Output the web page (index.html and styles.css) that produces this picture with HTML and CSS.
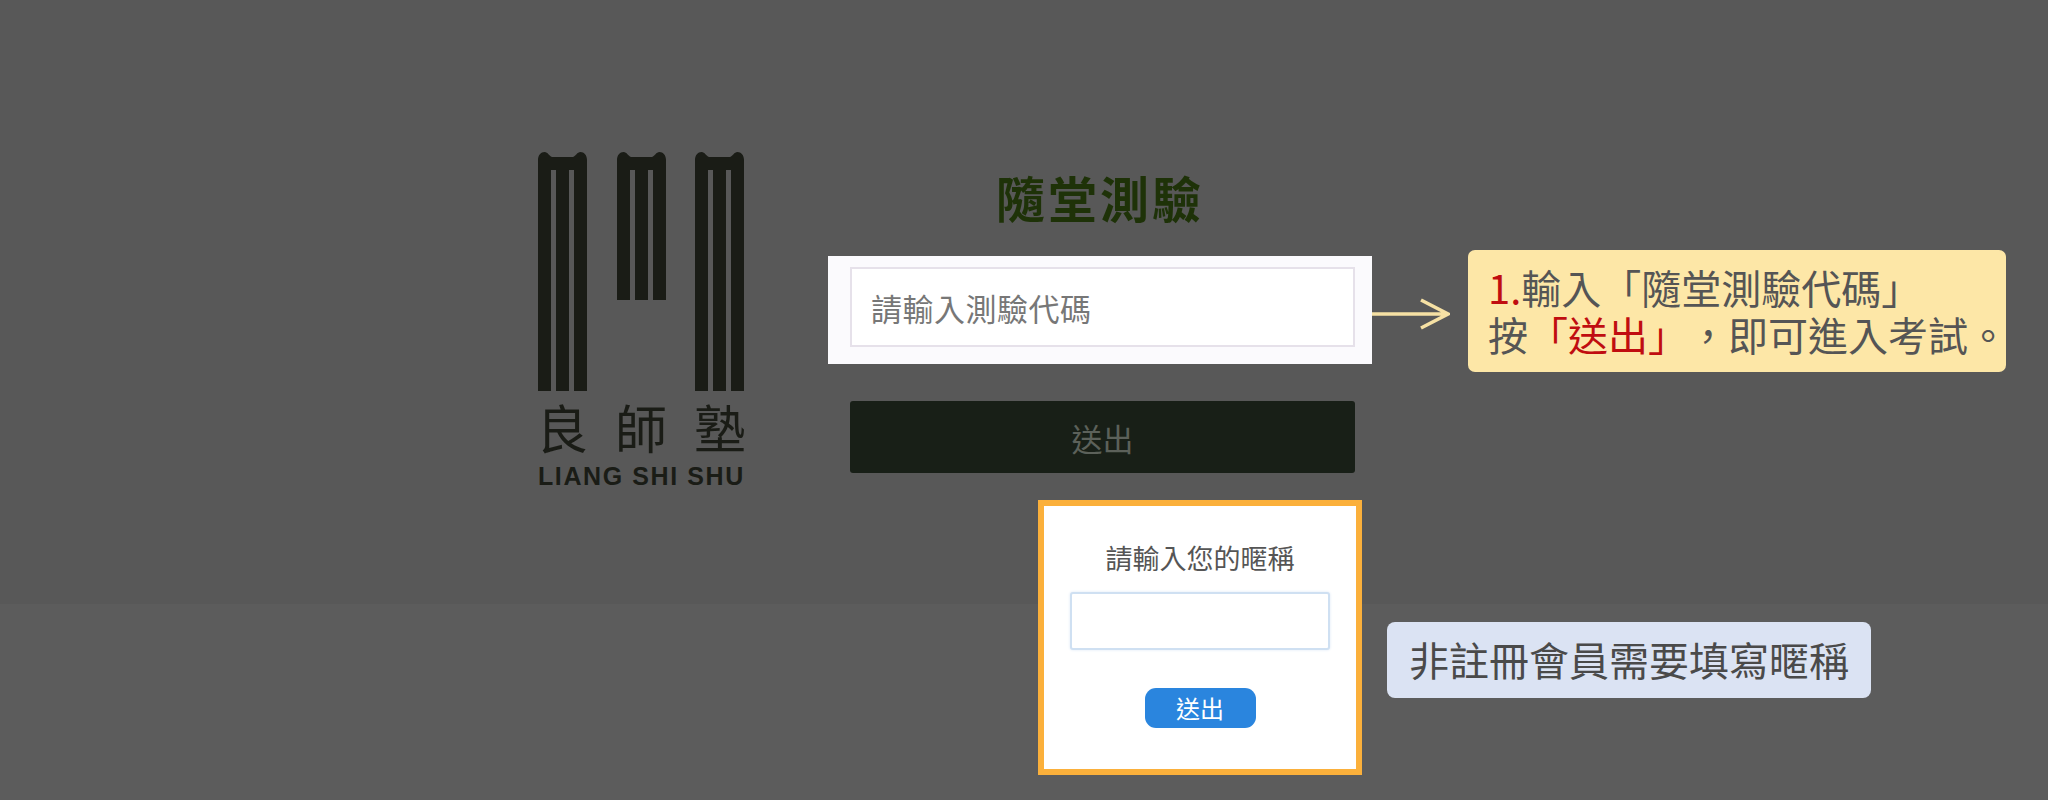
FILE: index.html
```html
<!DOCTYPE html>
<html lang="zh-Hant">
<head>
    <meta charset="UTF-8">
    <title>隨堂測驗</title>
    <link rel="stylesheet" href="styles.css">
</head>
<body>
    <div class="page">
        <div class="main">
            <div class="logo">
                <svg class="logo-mark" width="206" height="240" viewBox="0 0 206 240">
                    <path d="M0 239V8C0 3 3 0 6.500 0C10 0 11 4 14 5H35C38 4 39 0 42.500 0C46 0 49 3 49 8V239H36V18H31V239H18V18H13V239H0Z"/>
                    <path transform="translate(79 0)" d="M0 148V8C0 3 3 0 6.500 0C10 0 11 4 14 5H35C38 4 39 0 42.500 0C46 0 49 3 49 8V148H36V18H31V148H18V18H13V148H0Z"/>
                    <path transform="translate(157 0)" d="M0 239V8C0 3 3 0 6.500 0C10 0 11 4 14 5H35C38 4 39 0 42.500 0C46 0 49 3 49 8V239H36V18H31V239H18V18H13V239H0Z"/>
                </svg>
                <div class="logo-name"><span>良</span><span>師</span><span>塾</span></div>
                <div class="logo-en">LIANG SHI SHU</div>
            </div>
            <div class="form">
                <h1 class="title">隨堂測驗</h1>
                <div class="code-box">
                    <input class="code-input" type="text" placeholder="請輸入測驗代碼">
                </div>
                <button class="submit">送出</button>
            </div>
        </div>

        <div class="hint">
            <svg class="arrow" width="78" height="32" viewBox="0 0 78 32">
                <path d="M0 16H76M49 2L76 16L49 30"/>
            </svg>
            <div class="hint-text">
                <span class="red">1.</span>輸入「隨堂測驗代碼」<br>
                按<span class="red">「送出」</span>，即可進入考試。
            </div>
        </div>

        <div class="nick">
            <div class="dialog">
                <p class="dialog-label">請輸入您的暱稱</p>
                <input class="dialog-input" type="text">
                <button class="dialog-btn">送出</button>
            </div>
            <div class="note">非註冊會員需要填寫暱稱</div>
        </div>
    </div>
</body>
</html>
```

FILE: styles.css
```css
* {
    box-sizing: border-box;
}
body {
    margin: 0;
    font-family: "Noto Sans CJK TC", "Noto Sans", sans-serif;
    background: #5c5c5c;
}
.page {
    position: relative;
    height: 800px;
    overflow: hidden;
}
.main {
    height: 604px;
    background: #585858;
    display: flex;
    align-items: flex-start;
    padding-left: 538px;
}
.logo {
    width: 206px;
    margin-top: 152px;
}
.logo-mark {
    display: block;
    fill: #1a1c16;
}
.logo-name {
    display: flex;
    justify-content: space-between;
    margin: 2px -2px 0;
    font-size: 52px;
    line-height: 66px;
    font-weight: 400;
    color: #1a1c16;
}
.logo-en {
    margin-top: 2px;
    font-family: "Liberation Sans", Arial, sans-serif;
    font-size: 25px;
    line-height: 28px;
    font-weight: bold;
    letter-spacing: 1.6px;
    white-space: nowrap;
    color: #1a1c16;
}
.form {
    width: 544px;
    margin-left: 84px;
    padding-top: 164px;
}
.title {
    margin: 0;
    height: 92px;
    text-align: center;
    font-size: 49px;
    line-height: 66px;
    letter-spacing: 3px;
    font-weight: bold;
    color: #1e3208;
}
.code-box {
    height: 108px;
    padding: 11px 17px 17px 22px;
    background: #fbfafd;
}
.code-input {
    display: block;
    width: 100%;
    height: 80px;
    padding: 0 19px;
    border: 2px solid #e6e1ea;
    background: #fff;
    font-family: inherit;
    font-size: 31px;
    letter-spacing: 0.5px;
    color: #777;
}
.code-input::placeholder {
    color: #777;
    opacity: 1;
}
.submit {
    display: block;
    width: 505px;
    height: 72px;
    margin: 37px 0 0 22px;
    border: none;
    border-radius: 3px;
    background: #181f17;
    font-family: inherit;
    font-size: 31px;
    color: #5c615a;
}

/* annotations on top of the page */
.hint {
    position: absolute;
    left: 1372px;
    top: 250px;
    display: flex;
    align-items: flex-start;
    gap: 18px;
}
.arrow {
    margin-top: 48px;
    fill: none;
    stroke: #f6e1a4;
    stroke-width: 3.5px;
}
.hint-text {
    width: 538px;
    height: 122px;
    padding: 14px 0 0 20px;
    border-radius: 7px;
    background: #fde7a7;
    font-size: 40px;
    line-height: 47px;
    text-spacing-trim: space-all;
    white-space: nowrap;
    color: #555;
}
.red {
    color: #c00d10;
}
.nick {
    position: absolute;
    left: 1038px;
    top: 500px;
    display: flex;
    align-items: flex-start;
    gap: 25px;
}
.dialog {
    width: 324px;
    height: 275px;
    padding-top: 32px;
    border: 6px solid #fbb03b;
    background: #fff;
    display: flex;
    flex-direction: column;
    align-items: center;
}
.dialog-label {
    margin: 0;
    font-size: 27px;
    line-height: 40px;
    color: #555;
}
.dialog-input {
    width: 260px;
    height: 58px;
    margin-top: 14px;
    border: 2px solid #cfe0f2;
    border-radius: 3px;
    background: #fff;
    box-shadow: 0 0 3px #dce8f5;
}
.dialog-btn {
    width: 111px;
    height: 40px;
    margin-top: 38px;
    padding: 0 0 2px;
    border: none;
    border-radius: 11px;
    background: #2a85de;
    font-family: inherit;
    font-size: 24px;
    color: #fff;
}
.note {
    height: 76px;
    margin-top: 122px;
    padding: 0 22px;
    border-radius: 8px;
    background: #dbe3f3;
    font-size: 40px;
    line-height: 74px;
    white-space: nowrap;
    color: #4a4a4a;
}
```
